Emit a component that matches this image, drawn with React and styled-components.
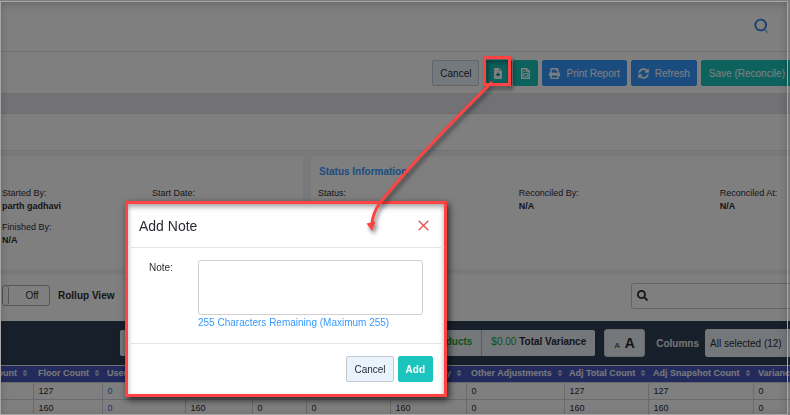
import React, { useState } from "react";
import styled, { createGlobalStyle } from "styled-components";
import { FaPrint, FaSyncAlt, FaSearch, FaSort } from "react-icons/fa";

const GlobalStyle = createGlobalStyle`
  * {
    box-sizing: border-box;
  }

  body {
    margin: 0;
    overflow: hidden;
    background: white;
    color: #2b2b33;
    font-family: "Liberation Sans", Arial, sans-serif;
    font-size: 10px;
  }

  button, input, select, textarea {
    font: inherit;
    color: inherit;
    margin: 0;
  }
`;

const Page = styled.div`
  width: calc(100% + 10px);
  min-height: 100vh;
`;

const TopBar = styled.header`
  display: flex;
  justify-content: flex-end;
  align-items: center;
  height: 52px;
  padding-right: 31px;
  border-bottom: 1px solid #e3e3e8;
`;

const IconButton = styled.button`
  display: flex;
  padding: 0;
  border: 0;
  background: none;
`;

const ActionBar = styled.div`
  display: flex;
  justify-content: flex-end;
  gap: 4px;
  padding: 8px 7px 7px 0;
`;

const buttonColors = {
  light: { background: "#e8f3fc", border: "#c5c9ce", text: "#2b2b33" },
  teal: { background: "#1bc5bd", border: "#1bc5bd", text: "white" },
  blue: { background: "#3699ff", border: "#3699ff", text: "white" },
};

const Button = styled.button`
  display: flex;
  justify-content: center;
  align-items: center;
  gap: 6px;
  height: 26px;
  padding: 0 ${(props) => (props.$icon ? "6px" : "7px")};
  border: 1px solid ${(props) => buttonColors[props.$color].border};
  border-radius: 2px;
  background: ${(props) => buttonColors[props.$color].background};
  color: ${(props) => buttonColors[props.$color].text};
  font-weight: ${(props) => (props.$bold ? "bold" : "normal")};
  white-space: nowrap;
`;

const ButtonPair = styled.div`
  display: flex;
  gap: 1px;

  button {
    width: 25px;
  }

  button:first-child {
    width: 29px;
  }
`;

const Band = styled.div`
  height: 21px;
  background: #e4e4ed;
  border-bottom: 1px solid #dadae0;
`;

const TitleBar = styled.div`
  height: 36px;
`;

const Panels = styled.div`
  display: flex;
  gap: 8px;
  padding: 5px 0;
  background: #eef2f7;
  border-top: 1px solid #e4e7ec;
`;

const Panel = styled.section`
  width: ${(props) => props.$width || "auto"};
  flex: ${(props) => (props.$width ? "none" : "1")};
  min-width: 0;
  height: 113px;
  padding: 8px 0 0 ${(props) => (props.$width ? "2px" : "7px")};
  background: white;
`;

const PanelTitle = styled.h2`
  height: 23px;
  margin: 0;
  padding-left: 1px;
  color: #3699ff;
  font-size: 10px;
  line-height: 15px;
`;

const Fields = styled.dl`
  display: grid;
  grid-template-columns: ${(props) => props.$columns};
  row-gap: 8px;
  margin: 0;
  font-size: 9px;
  line-height: 13px;
  white-space: nowrap;

  dd {
    min-height: 13px;
    margin: 0;
    font-weight: bold;
  }
`;

const Controls = styled.div`
  display: flex;
  align-items: center;
  height: 47px;
  padding: 0 0 4px 2px;
`;

const Toggle = styled.button`
  display: flex;
  align-items: center;
  width: 48px;
  height: 21px;
  margin-right: 8px;
  padding: 0;
  border: 1px solid #a9acb3;
  border-radius: 3px;
  background: white;

  &::before {
    content: "";
    width: 5px;
    height: 19px;
    border-right: 1px solid #a9acb3;
    border-radius: 3px;
  }

  span {
    flex: 1;
    padding-left: 6px;
    text-align: center;
  }
`;

const SearchBox = styled.label`
  display: flex;
  align-items: center;
  gap: 6px;
  width: 169px;
  height: 26px;
  margin-left: auto;
  padding-left: 5px;
  border: 1px solid #c4c7cc;
  border-radius: 3px;

  input {
    flex: 1;
    min-width: 0;
    border: 0;
    outline: 0;
    background: none;
  }
`;

const TableBar = styled.div`
  display: flex;
  align-items: center;
  height: 44px;
  padding-left: 120px;
  background: #2f3f54;
`;

const Totals = styled.div`
  display: flex;
  flex: 1;
  height: 26px;
  margin-right: 9px;
  border-radius: 2px;
  background: #e8f1f7;
  font-weight: bold;
  line-height: 24px;
  overflow: hidden;
`;

const Total = styled.div`
  flex: ${(props) => (props.$grow ? "1" : "none")};
  padding: 0 9px;
  color: ${(props) => (props.$green ? "#1fa32a" : "inherit")};
  border-right: 1px solid #b2b6bb;

  &:last-child {
    border: 0;
  }

  span {
    color: #1fa32a;
    font-weight: normal;
  }
`;

const FontSize = styled.button`
  display: flex;
  justify-content: center;
  align-items: baseline;
  gap: 5px;
  width: 41px;
  height: 28px;
  padding: 0;
  border: 1px solid #cfd6dc;
  border-radius: 3px;
  background: #e8f1f7;
  font-size: 8px;
  line-height: 26px;

  strong {
    font-size: 14px;
  }
`;

const ColumnsLabel = styled.label`
  margin: 0 6px 0 11px;
  color: #e9ecef;
  font-weight: bold;
`;

const ColumnsSelect = styled.select`
  width: 95px;
  height: 28px;
  padding: 0 5px;
  border: 0;
  border-radius: 3px 0 0 3px;
  background: #e8f1f7;
  appearance: none;
`;

const Table = styled.table`
  width: 100%;
  table-layout: fixed;
  border-collapse: collapse;
  font-size: 9px;
  white-space: nowrap;

  th {
    height: 17px;
    padding: 0 0 2px 5px;
    border-top: 1px solid #e4e6f5;
    background: #4557b8;
    color: #f2f3f8;
    text-align: left;
    overflow: hidden;
  }

  td {
    height: 17px;
    padding: 0 0 0 5px;
    border: 1px solid #d5d5d8;
    border-left: 0;
  }
`;

const HeadLabel = styled.div`
  display: flex;
  justify-content: ${(props) => (props.$end ? "flex-end" : "flex-start")};
  align-items: center;
  gap: 4px;
  padding-right: ${(props) => (props.$end ? "4px" : "0")};

  svg {
    flex: none;
    opacity: 0.7;
  }
`;

const LinkCell = styled.a`
  color: #2a7fd0;
  text-decoration: none;
`;

const Backdrop = styled.div`
  position: fixed;
  inset: 0;
  background: rgba(0, 0, 0, 0.5);
`;

const WindowEdge = styled.div`
  position: fixed;
  inset: 1px 2px 0 0;
  border: 1px solid #a6a6a6;
  box-shadow: inset 0 2px 8px rgba(0, 0, 0, 0.2);
  pointer-events: none;
`;

const Modal = styled.form`
  position: fixed;
  top: 201px;
  right: 343px;
  width: 322px;
  border: 3px solid #ff4343;
  background: white;
  box-shadow: 2px 3px 7px rgba(0, 0, 0, 0.7), inset 0 3px 5px rgba(0, 0, 0, 0.35);
`;

const ModalHeader = styled.div`
  display: flex;
  justify-content: space-between;
  align-items: center;
  height: 44px;
  padding: 0 15px 0 11px;
  border-bottom: 1px solid #e6e6e6;

  h1 {
    margin: 0;
    font-size: 14px;
    font-weight: normal;
  }
`;

const ModalBody = styled.div`
  display: flex;
  height: 95px;
  padding: 12px 21px 0;

  label {
    width: 49px;
    line-height: 16px;
  }
`;

const NoteField = styled.div`
  flex: 1;
  color: #3699ff;
  line-height: 16px;

  textarea {
    display: block;
    width: 100%;
    height: 55px;
    border: 1px solid #cfcfcf;
    border-radius: 3px;
    outline: 0;
    background: white;
    color: #2b2b33;
    resize: none;
  }
`;

const ModalFooter = styled.div`
  display: flex;
  justify-content: flex-end;
  gap: 4px;
  padding: 12px 11px;
  border-top: 1px solid #e6e6e6;
`;

const Callout = styled.svg`
  position: fixed;
  top: 50px;
  right: 270px;
  filter: drop-shadow(2px 3px 2px rgba(0, 0, 0, 0.5));
  pointer-events: none;
`;

const NoteAddIcon = () => (
  <svg width="8" height="11" viewBox="0 0 8 11">
    <path d="M.8 0H5v3h3v7.2a.8.8 0 0 1-.8.8H.8a.8.8 0 0 1-.8-.8V.8A.8.8 0 0 1 .8 0z" fill="white" />
    <path d="M5.6 0 8 2.4H5.6z" fill="white" />
    <path d="M4 4.6v4M2 6.6h4" stroke="#128a83" strokeWidth="1.2" />
  </svg>
);

const NoteListIcon = () => (
  <svg width="9" height="11" viewBox="0 0 9 11">
    <path d="M.7.7h4.9L8.3 3.4v6.9H.7z" fill="none" stroke="white" strokeWidth="1.4" />
    <path d="M5.4.6v3h3M2.2 3.2h2M2.2 5.6h4.6v2.6H2.2z" fill="none" stroke="white" />
  </svg>
);

const columns = [
  { label: "Snapshot Count", width: 33, end: true },
  { label: "Floor Count", width: 69 },
  { label: "User Count", width: 83 },
  { label: "Total", width: 67 },
  { label: "Sold", width: 54 },
  { label: "Returned", width: 84 },
  { label: "Adj. Quantity", width: 76 },
  { label: "Other Adjustments", width: 98 },
  { label: "Adj Total Count", width: 84 },
  { label: "Adj Snapshot Count", width: 105 },
  { label: "Variance" },
];

const rows = [
  ["", "127", "0", "127", "0", "0", "127", "0", "127", "127", "0"],
  ["", "160", "0", "160", "0", "0", "160", "0", "160", "160", "0"],
];

const Field = ({ label, value }) => (
  <div>
    <dt>{label}:</dt>
    <dd>{value}</dd>
  </div>
);

const CountTable = () => (
  <Table>
    <colgroup>
      {columns.map(({ label, width }) => (
        <col key={label} width={width} />
      ))}
    </colgroup>
    <thead>
      <tr>
        {columns.map(({ label, end }) => (
          <th key={label}>
            <HeadLabel $end={end}>
              {label}
              <FaSort size={8} />
            </HeadLabel>
          </th>
        ))}
      </tr>
    </thead>
    <tbody>
      {rows.map((row, i) => (
        <tr key={i}>
          {row.map((value, j) => (
            <td key={j}>{j === 2 ? <LinkCell href="#">{value}</LinkCell> : value}</td>
          ))}
        </tr>
      ))}
    </tbody>
  </Table>
);

const AddNote = () => {
  const [note, setNote] = useState("");

  return (
    <Modal onSubmit={(e) => e.preventDefault()}>
      <ModalHeader>
        <h1>Add Note</h1>
        <IconButton type="button" aria-label="Close">
          <svg width="11" height="11" viewBox="0 0 11 11">
            <path d="M.7.7l9.6 9.6M10.3.7L.7 10.3" stroke="#e25050" strokeWidth="1.3" />
          </svg>
        </IconButton>
      </ModalHeader>
      <ModalBody>
        <label htmlFor="note">Note:</label>
        <NoteField>
          <textarea
            id="note"
            maxLength={255}
            value={note}
            onChange={(e) => setNote(e.target.value)}
          />
          {255 - note.length} Characters Remaining (Maximum 255)
        </NoteField>
      </ModalBody>
      <ModalFooter>
        <Button type="button" $color="light">Cancel</Button>
        <Button type="submit" $color="teal" $bold>Add</Button>
      </ModalFooter>
    </Modal>
  );
};

const App = () => {
  return (
    <>
      <GlobalStyle />
      <Page>
        <TopBar>
          <IconButton aria-label="Search">
            <svg width="15" height="16" viewBox="0 0 15 16">
              <path d="M10.6 11.2l3.6 3.8" stroke="#3680e0" strokeWidth="2" opacity="0.4" />
              <circle cx="6.7" cy="7" r="5.4" fill="none" stroke="#3680e0" strokeWidth="1.9" />
            </svg>
          </IconButton>
        </TopBar>
        <ActionBar>
          <Button $color="light">Cancel</Button>
          <ButtonPair>
            <Button $color="teal" aria-label="Add note"><NoteAddIcon /></Button>
            <Button $color="teal" aria-label="View notes"><NoteListIcon /></Button>
          </ButtonPair>
          <Button $color="blue" $icon><FaPrint size={11} />Print Report</Button>
          <Button $color="blue" $icon><FaSyncAlt size={11} />Refresh</Button>
          <Button $color="teal">Save (Reconcile)</Button>
        </ActionBar>
        <Band />
        <TitleBar />
        <Panels>
          <Panel $width="303px">
            <PanelTitle />
            <Fields $columns="150px 1fr">
              <Field label="Started By" value="parth gadhavi" />
              <Field label="Start Date" />
              <Field label="Finished By" value="N/A" />
            </Fields>
          </Panel>
          <Panel>
            <PanelTitle>Status Information</PanelTitle>
            <Fields $columns="5fr 5fr 2fr">
              <Field label="Status" />
              <Field label="Reconciled By" value="N/A" />
              <Field label="Reconciled At" value="N/A" />
            </Fields>
          </Panel>
        </Panels>
        <Controls>
          <Toggle id="rollup" type="button"><span>Off</span></Toggle>
          <label htmlFor="rollup"><strong>Rollup View</strong></label>
          <SearchBox>
            <FaSearch size={11} />
            <input type="text" aria-label="Search products" />
          </SearchBox>
        </Controls>
        <TableBar>
          <Totals>
            <Total $grow />
            <Total $green>0 Products</Total>
            <Total><span>$0.00</span> Total Variance</Total>
          </Totals>
          <FontSize aria-label="Text size">A <strong>A</strong></FontSize>
          <ColumnsLabel htmlFor="columns">Columns</ColumnsLabel>
          <ColumnsSelect id="columns">
            <option>All selected (12)</option>
          </ColumnsSelect>
        </TableBar>
        <CountTable />
      </Page>
      <Backdrop />
      <WindowEdge />
      <AddNote />
      <Callout width="160" height="200" viewBox="0 0 160 200">
        <rect x="124.5" y="7.5" width="25" height="27" fill="none" stroke="#ff4343" strokeWidth="3" />
        <path d="M132 32C104 60 76 88 47 121S14 158 12 173" fill="none" stroke="#ff4343" strokeWidth="3" />
        <path d="M6.5 173.5l9-2-3.5 9.5z" fill="#ff4343" />
      </Callout>
    </>
  );
};

export default App;
